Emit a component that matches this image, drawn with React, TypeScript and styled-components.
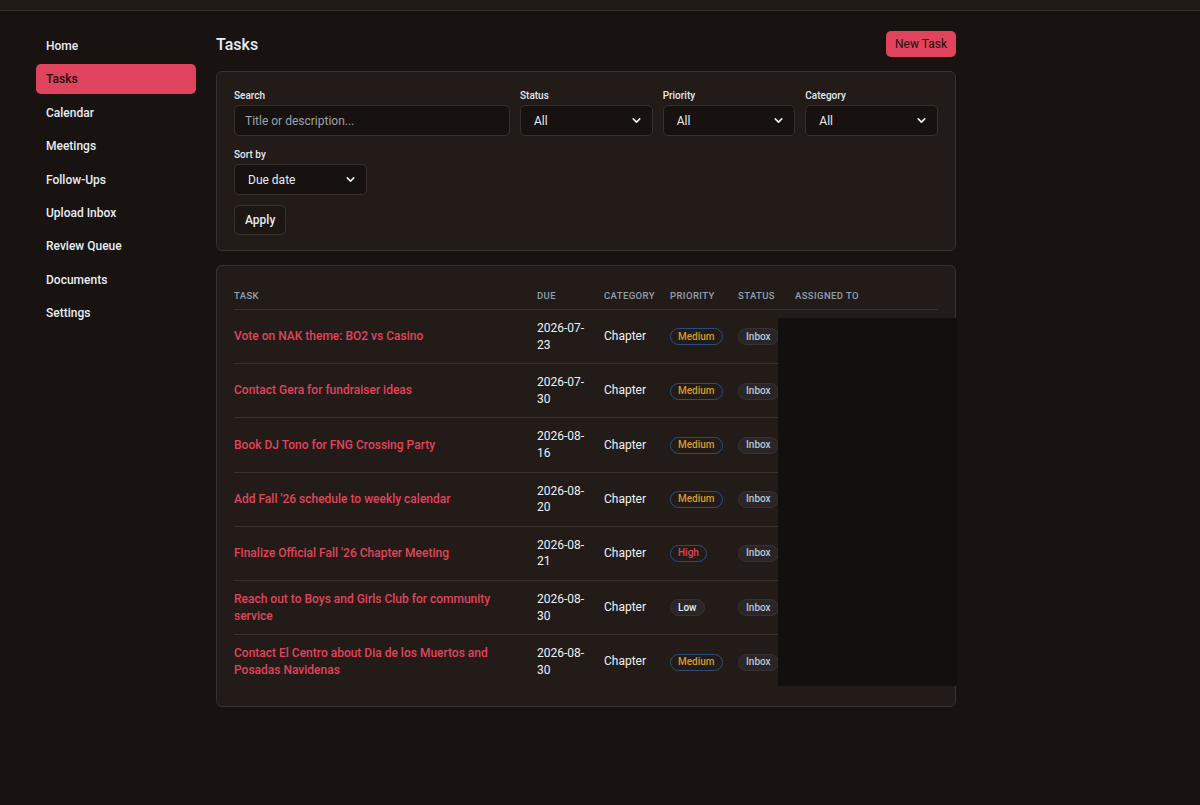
import styled, { createGlobalStyle } from 'styled-components';
import { ChevronDown } from 'lucide-react';

const GlobalStyle = createGlobalStyle`
    * {
        box-sizing: border-box;
    }
    body {
        margin: 0;
        background: #181311;
        color: #e6edf3;
        font-family: Roboto, 'Noto Sans', sans-serif;
    }
`;

const TopBar = styled.div`
    height: 11px;
    background: #201916;
    border-bottom: 1px solid #3a302b;
`;

const Layout = styled.div`
    display: flex;
    gap: 20px;
    padding: 20px 36px;
    min-height: 794px;
`;

const Sidebar = styled.nav`
    width: 160px;
    display: flex;
    flex-direction: column;
    gap: 3.4px;
`;

const NavItem = styled.a<{ $active?: boolean }>`
    display: flex;
    align-items: center;
    height: 30px;
    padding: 0 10px;
    border-radius: 5px;
    font-size: 12px;
    font-weight: 500;
    color: ${(p) => (p.$active ? '#1a0f10' : '#e6edf3')};
    background: ${(p) => (p.$active ? '#e0445c' : 'transparent')};
    text-decoration: none;
`;

const Main = styled.main`
    width: 740px;
    display: flex;
    flex-direction: column;
    gap: 14px;
`;

const TitleRow = styled.div`
    display: flex;
    align-items: center;
    justify-content: space-between;
    height: 26px;
`;

const Title = styled.h1`
    margin: 0;
    font-size: 16px;
    font-weight: 500;
`;

const PrimaryButton = styled.button`
    height: 26px;
    padding: 0 9px;
    border: none;
    border-radius: 5px;
    background: #e0445c;
    color: #1a0f10;
    font-family: inherit;
    font-size: 12px;
    font-weight: 400;
`;

const Card = styled.section`
    background: #221b17;
    border: 1px solid #3a302b;
    border-radius: 6px;
    padding: 17px 17px 15px;
`;

const FilterGrid = styled.div<{ $cols: string; $gap: number }>`
    display: grid;
    grid-template-columns: ${(p) => p.$cols};
    gap: 10px;
    margin-bottom: ${(p) => p.$gap}px;
`;

const Field = styled.label`
    display: flex;
    flex-direction: column;
    gap: 3px;
`;

const Label = styled.span`
    font-size: 10px;
    font-weight: 500;
    line-height: 13px;
    color: #e1e9f2;
`;

const Input = styled.input`
    height: 31px;
    padding: 0 10px;
    background: #171210;
    border: 1px solid #3a302b;
    border-radius: 5px;
    color: #e6edf3;
    font-family: inherit;
    font-size: 12px;
    &::placeholder {
        color: #9aa3ad;
    }
`;

const SelectWrap = styled.div`
    position: relative;
    height: 31px;
`;

const Select = styled.select`
    width: 100%;
    height: 100%;
    padding: 0 13px;
    appearance: none;
    background: #171210;
    border: 1px solid #3a302b;
    border-radius: 5px;
    color: #e6edf3;
    font-family: inherit;
    font-size: 12px;
`;

const Chevron = styled(ChevronDown)`
    position: absolute;
    right: 10px;
    top: 9px;
    pointer-events: none;
    color: #e6edf3;
`;

const GhostButton = styled.button`
    height: 30px;
    padding: 0 10px;
    background: #1d1714;
    border: 1px solid #3a302b;
    border-radius: 5px;
    color: #e6edf3;
    font-family: inherit;
    font-size: 12px;
    font-weight: 500;
`;

const TableCard = styled(Card)`
    position: relative;
    padding: 17px 17px 18px;
`;

const Table = styled.table`
    width: 100%;
    table-layout: fixed;
    border-collapse: collapse;
`;

const Th = styled.th<{ $w: number }>`
    width: ${(p) => p.$w}px;
    padding: 7px 10px 7px 0;
    text-align: left;
    font-size: 9.5px;
    font-weight: 500;
    letter-spacing: 0.4px;
    line-height: 12px;
    text-transform: uppercase;
    color: #8fa0b5;
    border-bottom: 1px solid #3a302b;
`;

const Td = styled.td<{ $tone?: 'task' | 'plain' }>`
    padding: 10px 10px 10px 0;
    font-size: 12px;
    line-height: 16.6px;
    font-weight: ${(p) => (p.$tone === 'task' ? 500 : 400)};
    color: ${(p) => (p.$tone === 'task' ? '#e0445c' : '#eef2f6')};
    border-bottom: 1px solid #3a302b;
    vertical-align: middle;
`;

const Row = styled.tr`
    &:last-child td {
        border-bottom: none;
    }
`;

const Badge = styled.span<{ $kind: 'Medium' | 'High' | 'Low' | 'Inbox' }>`
    display: inline-flex;
    align-items: center;
    height: 17px;
    padding: 0 7px;
    border-radius: 9px;
    font-size: 10px;
    font-weight: 500;
    border: 1px solid
        ${(p) => (p.$kind === 'Medium' || p.$kind === 'High' ? '#2b4d7e' : '#383234')};
    background: ${(p) => (p.$kind === 'Medium' || p.$kind === 'High' ? 'transparent' : '#2a2526')};
    color: ${(p) =>
        p.$kind === 'Medium' ? '#d99a2b' : p.$kind === 'High' ? '#e0445c' : p.$kind === 'Low' ? '#e6edf3' : '#b9c6d8'};
`;

const Redaction = styled.div`
    position: absolute;
    left: 561px;
    top: 52px;
    width: 179px;
    height: 368px;
    background: #12100e;
`;

const navItems = [
    'Home',
    'Tasks',
    'Calendar',
    'Meetings',
    'Follow-Ups',
    'Upload Inbox',
    'Review Queue',
    'Documents',
    'Settings',
];

type Priority = 'Medium' | 'High' | 'Low';

const tasks: { title: string; due: string; priority: Priority }[] = [
    { title: 'Vote on NAK theme: BO2 vs Casino', due: '2026-07-23', priority: 'Medium' },
    { title: 'Contact Gera for fundraiser ideas', due: '2026-07-30', priority: 'Medium' },
    { title: 'Book DJ Tono for FNG Crossing Party', due: '2026-08-16', priority: 'Medium' },
    { title: "Add Fall '26 schedule to weekly calendar", due: '2026-08-20', priority: 'Medium' },
    { title: "Finalize Official Fall '26 Chapter Meeting", due: '2026-08-21', priority: 'High' },
    { title: 'Reach out to Boys and Girls Club for community service', due: '2026-08-30', priority: 'Low' },
    {
        title: 'Contact El Centro about Dia de los Muertos and Posadas Navidenas',
        due: '2026-08-30',
        priority: 'Medium',
    },
];

const columns = [
    { label: 'Task', w: 303 },
    { label: 'Due', w: 67 },
    { label: 'Category', w: 66 },
    { label: 'Priority', w: 68 },
    { label: 'Status', w: 57 },
    { label: 'Assigned to', w: 143 },
];

function SelectField({ label, value }: { label: string; value: string }) {
    return (
        <Field as="div">
            <Label>{label}</Label>
            <SelectWrap>
                <Select defaultValue={value}>
                    <option>{value}</option>
                </Select>
                <Chevron size={13} strokeWidth={3} />
            </SelectWrap>
        </Field>
    );
}

function App() {
    return (
        <>
            <GlobalStyle />
            <TopBar />
            <Layout>
                <Sidebar>
                    {navItems.map((item) => (
                        <NavItem key={item} $active={item === 'Tasks'}>
                            {item}
                        </NavItem>
                    ))}
                </Sidebar>
                <Main>
                    <TitleRow>
                        <Title>Tasks</Title>
                        <PrimaryButton>New Task</PrimaryButton>
                    </TitleRow>

                    <Card>
                        <FilterGrid $cols="276px repeat(3, 1fr)" $gap={12}>
                            <Field>
                                <Label>Search</Label>
                                <Input placeholder="Title or description..." />
                            </Field>
                            <SelectField label="Status" value="All" />
                            <SelectField label="Priority" value="All" />
                            <SelectField label="Category" value="All" />
                        </FilterGrid>
                        <FilterGrid $cols="133px" $gap={10}>
                            <SelectField label="Sort by" value="Due date" />
                        </FilterGrid>
                        <GhostButton>Apply</GhostButton>
                    </Card>

                    <TableCard>
                        <Table>
                            <thead>
                                <tr>
                                    {columns.map((c) => (
                                        <Th key={c.label} $w={c.w}>
                                            {c.label}
                                        </Th>
                                    ))}
                                </tr>
                            </thead>
                            <tbody>
                                {tasks.map((t) => (
                                    <Row key={t.title}>
                                        <Td $tone="task">{t.title}</Td>
                                        <Td>{t.due}</Td>
                                        <Td>Chapter</Td>
                                        <Td>
                                            <Badge $kind={t.priority}>{t.priority}</Badge>
                                        </Td>
                                        <Td>
                                            <Badge $kind="Inbox">Inbox</Badge>
                                        </Td>
                                        <Td />
                                    </Row>
                                ))}
                            </tbody>
                        </Table>
                        <Redaction />
                    </TableCard>
                </Main>
            </Layout>
        </>
    );
}

export default App;
